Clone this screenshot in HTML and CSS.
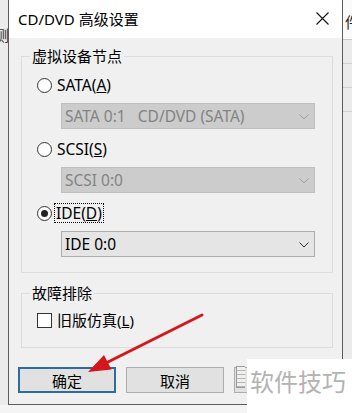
FILE: index.html
```html
<!DOCTYPE html>
<html lang="zh-CN">
<head>
    <meta charset="UTF-8">
    <meta name="viewport" content="width=device-width, initial-scale=1.0">
    <title>CD/DVD 高级设置</title>

    <link rel="stylesheet" href="styles.css">
</head>
<body>
    <div class="screen">
        <!-- Ventana de fondo, lado izquierdo -->
        <div class="edge edge-left"><span class="edge-text">测</span></div>

        <div class="dialog">
            <div class="titlebar">
                <span class="title">CD/DVD 高级设置</span>
                <span class="close">
                    <svg width="13" height="13" viewBox="0 0 13 13">
                        <path d="M0.5 0.5 L12.5 12.5 M12.5 0.5 L0.5 12.5" stroke="#111" stroke-width="1.1" fill="none"/>
                    </svg>
                </span>
            </div>

            <div class="content">
                <fieldset class="group">
                    <legend>虚拟设备节点</legend>
                    <div class="group-body">
                        <div class="option">
                            <span class="radio"></span>
                            <span class="label label-latin">SATA(<u>A</u>)</span>
                        </div>
                        <div class="combo combo-disabled">
                            <span class="combo-text">SATA 0:1   CD/DVD (SATA)</span>
                            <svg class="chevron" width="10" height="6" viewBox="0 0 10 6">
                                <polyline points="0.5,0.5 5,5 9.5,0.5" fill="none" stroke="#a3a3a3" stroke-width="1"/>
                            </svg>
                        </div>

                        <div class="option option-gap">
                            <span class="radio"></span>
                            <span class="label label-latin">SCSI(<u>S</u>)</span>
                        </div>
                        <div class="combo combo-disabled">
                            <span class="combo-text">SCSI 0:0</span>
                            <svg class="chevron" width="10" height="6" viewBox="0 0 10 6">
                                <polyline points="0.5,0.5 5,5 9.5,0.5" fill="none" stroke="#a3a3a3" stroke-width="1"/>
                            </svg>
                        </div>

                        <div class="option option-gap">
                            <span class="radio radio-checked"></span>
                            <span class="label label-latin label-focus">IDE(<u>D</u>)</span>
                        </div>
                        <div class="combo">
                            <span class="combo-text">IDE 0:0</span>
                            <svg class="chevron" width="10" height="6" viewBox="0 0 10 6">
                                <polyline points="0.5,0.5 5,5 9.5,0.5" fill="none" stroke="#333" stroke-width="1"/>
                            </svg>
                        </div>
                    </div>
                </fieldset>

                <fieldset class="group group-second">
                    <legend>故障排除</legend>
                    <div class="group-body group-body-small">
                        <div class="option">
                            <span class="checkbox"></span>
                            <span class="label">旧版仿真(<u>L</u>)</span>
                        </div>
                    </div>
                </fieldset>

                <div class="buttons">
                    <button class="btn btn-default">确定</button>
                    <button class="btn">取消</button>
                    <!-- el texto de este botón queda tapado por la marca de agua -->
                    <button class="btn" aria-label="帮助"></button>
                </div>
            </div>
        </div>

        <!-- Ventana de fondo, lado derecho -->
        <div class="edge edge-right">
            <div class="edge-top"><span class="edge-text">件</span></div>
            <div class="edge-row"></div>
            <div class="edge-row"></div>
            <div class="edge-row"></div>
        </div>

        <!-- Flecha roja sobre el botón -->
        <svg class="arrow" width="352" height="413" viewBox="0 0 352 413">
            <line x1="202" y1="315" x2="106" y2="363" stroke="#d3171d" stroke-width="3" stroke-linecap="round"/>
            <polygon points="88,372 111.5,369.6 104,355" fill="#d3171d"/>
        </svg>

        <div class="watermark">
            <span class="watermark-logo"></span>
            <span class="watermark-text">软件技巧</span>
        </div>
    </div>
</body>
</html>
```

FILE: styles.css
```css
body {
    margin: 0;
    font-family: "Noto Sans", "Noto Sans CJK SC", sans-serif;
    font-size: 15px;
    color: #000;
    background-color: #f4f4f4;
}

.screen {
    position: relative;
    display: flex;
    width: 352px;
    height: 413px;
    overflow: hidden;
}

/* bordes de la ventana de atrás */
.edge {
    flex: none;
    overflow: hidden;
    background-color: #ebebeb;
}

.edge-left {
    width: 8px;
    height: 405px;
}

.edge-left .edge-text {
    display: block;
    margin-top: 24px;
    margin-left: -6px;
    font-size: 15px;
    color: #333;
}

.edge-right {
    width: 9px;
    height: 405px;
}

.edge-top {
    height: 39px;
    background-color: #fafafa;
    border-bottom: 1px solid #c9c9c9;
}

.edge-top .edge-text {
    display: block;
    padding-top: 11px;
    margin-left: 2px;
    font-size: 15px;
    color: #222;
}

.edge-row {
    height: 23px;
    border-bottom: 1px solid #d0d0d0;
}

/* diálogo */
.dialog {
    flex: none;
    width: 335px;
    height: 405px;
    box-sizing: border-box;
    background-color: #f0f0f0;
    border-left: 1px solid #5c5c5c;
    border-right: 1px solid #5c5c5c;
    border-bottom: 1px solid #5c5c5c;
}

.titlebar {
    display: flex;
    align-items: center;
    justify-content: space-between;
    height: 38px;
    padding: 0 13px 0 9px;
    background-color: #fff;
}

.title {
    font-size: 15px;
    padding-bottom: 1px;
}

.close {
    display: flex;
    margin-top: -1px;
}

.content {
    padding: 8px 9px 10px 9px;
}

.group {
    margin: 0 0 0 3px;
    padding: 0;
    min-width: 0;
    border: 1px solid #dcdcdc;
}

.group legend {
    margin-left: 8px;
    padding: 0 2px;
    font-size: 15px;
    line-height: 20px;
}

.group-second {
    margin-top: 10px;
}

.group-body {
    padding: 9px 0 15px 15px;
}

.group-body-small {
    padding-top: 7px;
    padding-bottom: 17px;
}

.option {
    display: flex;
    align-items: center;
    height: 20px;
}

.option-gap {
    margin-top: 10px;
}

.radio {
    position: relative;
    width: 15px;
    height: 15px;
    box-sizing: border-box;
    border: 1px solid #333;
    border-radius: 50%;
    background-color: #fff;
}

.radio-checked::after {
    content: "";
    position: absolute;
    left: 3px;
    top: 3px;
    width: 7px;
    height: 7px;
    border-radius: 50%;
    background-color: #222;
}

.checkbox {
    width: 15px;
    height: 15px;
    box-sizing: border-box;
    border: 1px solid #333;
    background-color: #fff;
}

.label {
    margin-left: 5px;
    line-height: 18px;
}

.label-latin {
    font-size: 15.5px;
}

.label-focus {
    margin-left: 3px;
    padding: 0 1px;
    outline: 1px dotted #000;
}

.combo {
    display: flex;
    align-items: center;
    justify-content: space-between;
    width: 254px;
    height: 26px;
    box-sizing: border-box;
    margin: 8px 0 0 24px;
    padding: 0 5px 0 3px;
    background-color: #e5e5e5;
    border: 1px solid #adadad;
}

.combo-text {
    font-size: 15.5px;
    white-space: pre;
}

.combo-disabled {
    background-color: #cccccc;
    border-color: #bfbfbf;
    color: #838383;
}

.chevron {
    margin-top: 1px;
}

.buttons {
    display: flex;
    gap: 10px;
    margin-top: 19px;
}

.btn {
    width: 98px;
    height: 26px;
    padding: 0;
    font-family: inherit;
    font-size: 15px;
    color: #000;
    background-color: #e1e1e1;
    border: 1px solid #adadad;
}

.btn-default {
    border: 2px solid #2d6c9c;
}

/* capas encima */
.arrow {
    position: absolute;
    left: 0;
    top: 0;
    pointer-events: none;
}

.watermark {
    position: absolute;
    left: 247px;
    top: 359px;
    width: 105px;
    height: 54px;
    background-color: #fff;
}

.watermark-logo {
    position: absolute;
    left: -11px;
    top: 7px;
    width: 9px;
    height: 22px;
    box-sizing: border-box;
    border: 1px solid #9a9a9a;
    border-right: none;
    background: repeating-linear-gradient(#f0f0f0 0 3px, #b5b5b5 3px 4px);
}

.watermark-text {
    position: absolute;
    left: 3px;
    top: 7px;
    font-size: 24px;
    line-height: 32px;
    color: #b3b3b3;
    white-space: nowrap;
}
```
